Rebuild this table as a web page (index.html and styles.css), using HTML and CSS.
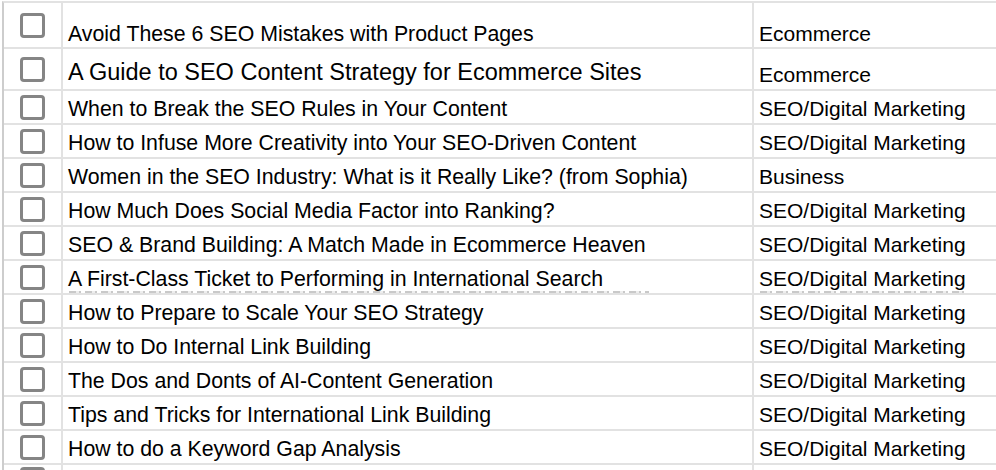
FILE: index.html
```html
<!DOCTYPE html>
<html>
<head>
<meta charset="utf-8">
<link rel="stylesheet" href="styles.css">
</head>
<body>
<div class="sheet">
  <div class="row r1">
    <div class="cell chk"><span class="box"></span></div>
    <div class="cell title">Avoid These 6 SEO Mistakes with Product Pages</div>
    <div class="cell cat">Ecommerce</div>
  </div>
  <div class="row r2">
    <div class="cell chk"><span class="box"></span></div>
    <div class="cell title big">A Guide to SEO Content Strategy for Ecommerce Sites</div>
    <div class="cell cat">Ecommerce</div>
  </div>
  <div class="row">
    <div class="cell chk"><span class="box"></span></div>
    <div class="cell title">When to Break the SEO Rules in Your Content</div>
    <div class="cell cat">SEO/Digital Marketing</div>
  </div>
  <div class="row">
    <div class="cell chk"><span class="box"></span></div>
    <div class="cell title">How to Infuse More Creativity into Your SEO-Driven Content</div>
    <div class="cell cat">SEO/Digital Marketing</div>
  </div>
  <div class="row">
    <div class="cell chk"><span class="box"></span></div>
    <div class="cell title">Women in the SEO Industry: What is it Really Like? (from Sophia)</div>
    <div class="cell cat">Business</div>
  </div>
  <div class="row">
    <div class="cell chk"><span class="box"></span></div>
    <div class="cell title">How Much Does Social Media Factor into Ranking?</div>
    <div class="cell cat">SEO/Digital Marketing</div>
  </div>
  <div class="row">
    <div class="cell chk"><span class="box"></span></div>
    <div class="cell title">SEO &amp; Brand Building: A Match Made in Ecommerce Heaven</div>
    <div class="cell cat">SEO/Digital Marketing</div>
  </div>
  <div class="row">
    <div class="cell chk"><span class="box"></span></div>
    <div class="cell title">A First-Class Ticket to Performing in International Search<span class="ghost ghost-title"></span></div>
    <div class="cell cat">SEO/Digital Marketing<span class="ghost ghost-cat"></span></div>
  </div>
  <div class="row">
    <div class="cell chk"><span class="box"></span></div>
    <div class="cell title">How to Prepare to Scale Your SEO Strategy</div>
    <div class="cell cat">SEO/Digital Marketing</div>
  </div>
  <div class="row">
    <div class="cell chk"><span class="box"></span></div>
    <div class="cell title">How to Do Internal Link Building</div>
    <div class="cell cat">SEO/Digital Marketing</div>
  </div>
  <div class="row">
    <div class="cell chk"><span class="box"></span></div>
    <div class="cell title">The Dos and Donts of AI-Content Generation</div>
    <div class="cell cat">SEO/Digital Marketing</div>
  </div>
  <div class="row">
    <div class="cell chk"><span class="box"></span></div>
    <div class="cell title">Tips and Tricks for International Link Building</div>
    <div class="cell cat">SEO/Digital Marketing</div>
  </div>
  <div class="row">
    <div class="cell chk"><span class="box"></span></div>
    <div class="cell title">How to do a Keyword Gap Analysis</div>
    <div class="cell cat">SEO/Digital Marketing</div>
  </div>
  <div class="row last">
    <div class="cell chk"><span class="box"></span></div>
    <div class="cell title"></div>
    <div class="cell cat"></div>
  </div>
</div>
</body>
</html>
```

FILE: styles.css
```css
* { box-sizing: border-box; }
html, body { margin: 0; padding: 0; background: #fff; }
body {
  font-family: "Liberation Sans", Arial, sans-serif;
  color: #000;
  overflow: hidden;
  height: 470px;
}
.sheet {
  margin: 1px 0 0 2px;
  border-top: 2px solid #e2e2e2;
  border-left: 2px solid #cdcdcd;
}
.row {
  display: grid;
  grid-template-columns: 59px 691px 1fr;
  height: 34px;
  border-bottom: 2px solid #e2e2e2;
}
.row.r1 { height: 46px; }
.row.r2 { height: 42px; }
.row.last { height: 5px; border-bottom: 0; overflow: hidden; }
.cell {
  display: flex;
  align-items: flex-end;
  padding: 0 4px 2px 5px;
  font-size: 21px;
  line-height: 24px;
  white-space: nowrap;
  overflow: hidden;
  position: relative;
}
.cell.chk {
  align-items: center;
  justify-content: center;
  padding: 0;
  border-right: 2px solid #e2e2e2;
}
.row.last .cell.chk { align-items: flex-start; padding-top: 2px; }
.cell.title {
  border-right: 2px solid #e2e2e2;
  padding-left: 5px;
  font-size: 21.3px;
}
.cell.cat { padding-left: 5px; }
.row.r1 .cell.title, .row.r1 .cell.cat { padding-bottom: 1px; }
.cell.big { font-size: 23.5px; line-height: 27px; padding-bottom: 3px; }
.box {
  flex: none;
  width: 25px;
  height: 25px;
  border: 3px solid #858585;
  border-radius: 4px;
  background: #fff;
}
.ghost {
  position: absolute;
  bottom: 0;
  height: 2px;
  background: repeating-linear-gradient(90deg, #c9c9c9 0 7px, #eeeeee 7px 10px, #c9c9c9 10px 12px, transparent 12px 16px);
}
.ghost-title { left: 6px; width: 580px; }
.ghost-cat { left: 6px; width: 208px; }
```
